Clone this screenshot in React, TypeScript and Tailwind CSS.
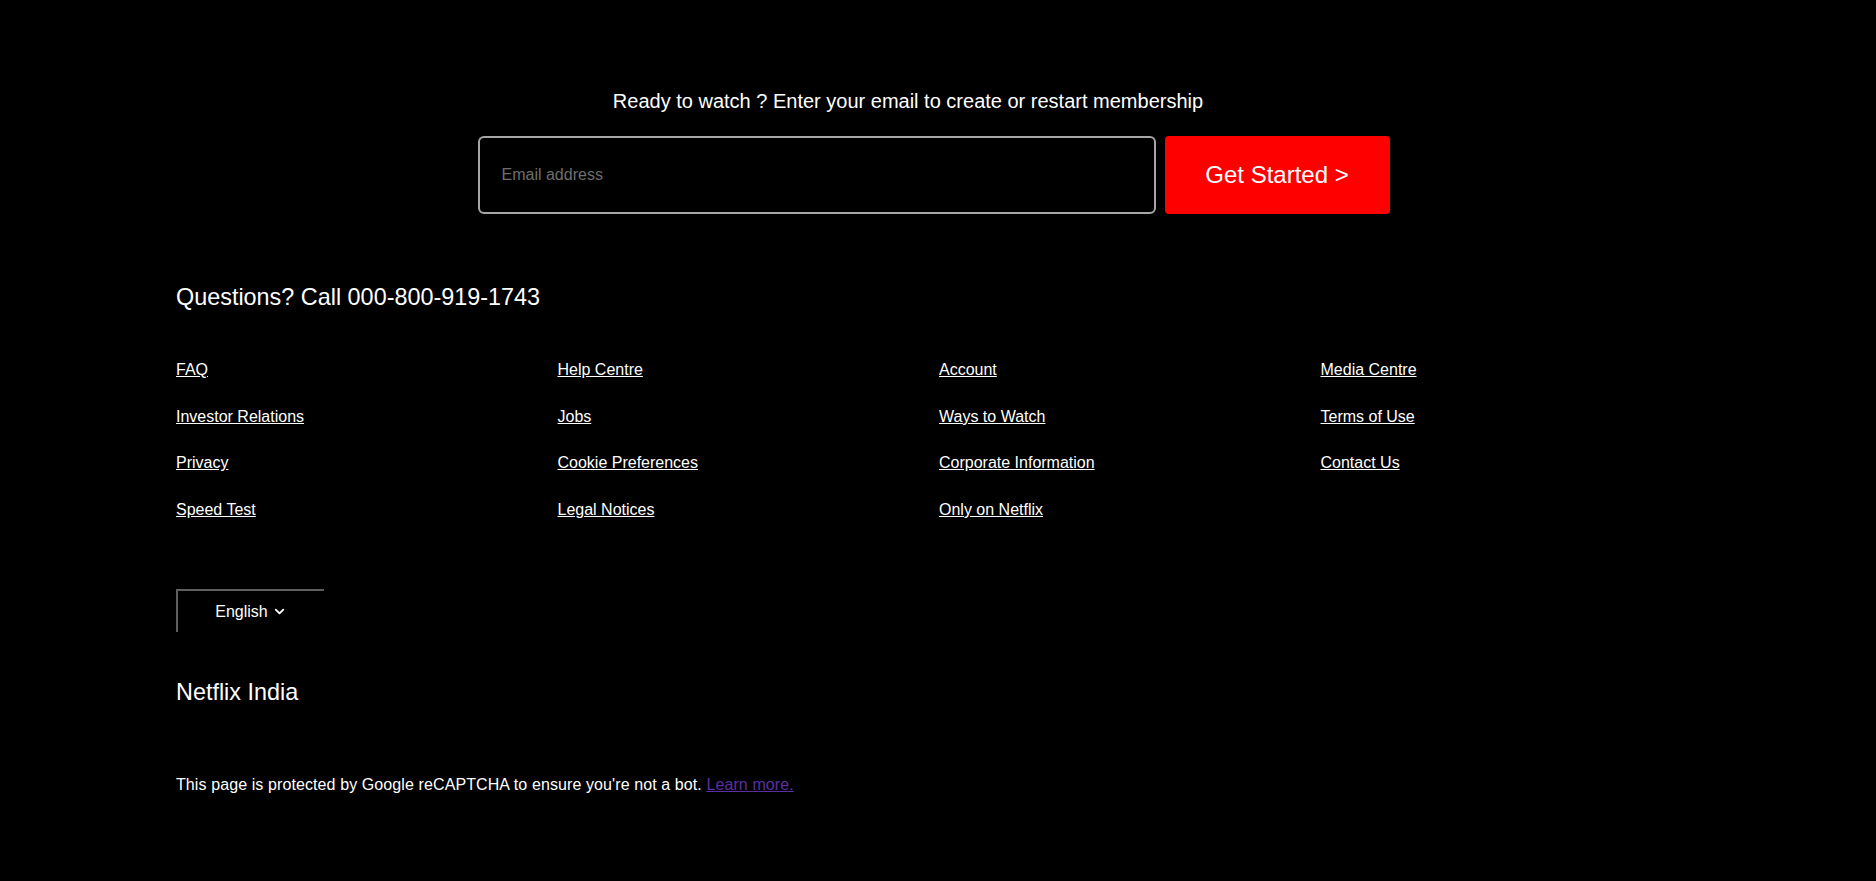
import { ChevronDown } from "lucide-react";

const links = [
  "FAQ",
  "Help Centre",
  "Account",
  "Media Centre",
  "Investor Relations",
  "Jobs",
  "Ways to Watch",
  "Terms of Use",
  "Privacy",
  "Cookie Preferences",
  "Corporate Information",
  "Contact Us",
  "Speed Test",
  "Legal Notices",
  "Only on Netflix",
];

export default function App() {
  return (
    <div className="min-h-screen w-full bg-black text-white font-['Liberation_Sans',Arial,sans-serif]">
      <section className="flex flex-col items-center pt-[89px]">
        <h3 className="text-[20px] leading-[24px] mr-[60px]">
          Ready to watch ? Enter your email to create or restart membership
        </h3>
        <form className="mt-[23px] flex gap-[9px] pr-[9px]">
          <input
            type="email"
            placeholder="Email address"
            className="w-[678px] h-[78px] rounded-[6px] border-2 border-[#a6a6a6] bg-black px-[22px] text-[16px] text-white placeholder:text-[#6e6e6e] outline-none"
          />
          <button
            type="button"
            className="w-[225px] h-[78px] rounded-[4px] bg-[#ff0000] text-[24px] text-white"
          >
            Get Started &gt;
          </button>
        </form>
      </section>

      <footer className="pl-[176px] pr-[174px] pt-[69px] pb-[80px]">
        <p className="text-[23.4px] leading-[28px]">Questions? Call 000-800-919-1743</p>

        <div className="mt-[50px] grid grid-cols-4 gap-y-[28.7px]">
          {links.map((label) => (
            <a key={label} href="#" className="text-[16px] leading-[18px] underline w-fit">
              {label}
            </a>
          ))}
        </div>

        <div className="mt-[70px] flex h-[43px] w-[148px] items-center justify-center gap-[4px] border-t-2 border-l-2 border-[#5e5e5e] text-[16px]">
          <span>English</span>
          <ChevronDown size={15} strokeWidth={3} />
        </div>

        <p className="mt-[46px] text-[23.4px] leading-[28px]">Netflix India</p>

        <p className="mt-[70px] text-[16px] leading-[18px] tracking-[0.1px]">
          This page is protected by Google reCAPTCHA to ensure you're not a bot.{" "}
          <a href="#" className="underline text-[#5b2fa3]">
            Learn more.
          </a>
        </p>
      </footer>
    </div>
  );
}
